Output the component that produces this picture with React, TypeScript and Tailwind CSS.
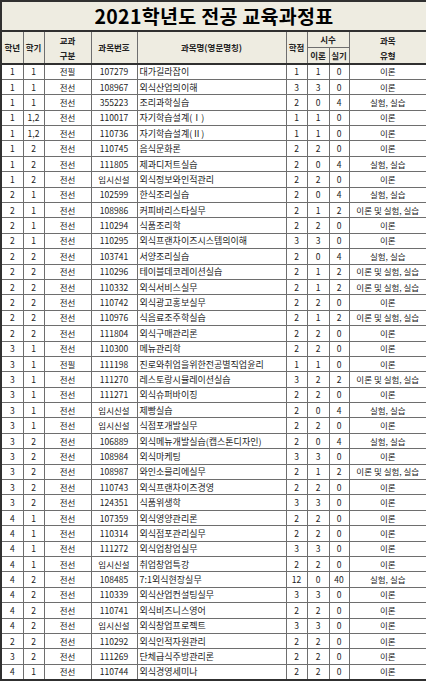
import React from 'react';

type Course = [string, string, string, string, string, number, number, number, string];

const courses: Course[] = [
  ['1', '1', '전필', '107279', '대가길라잡이', 1, 1, 0, '이론'],
  ['1', '1', '전선', '108967', '외식산업의이해', 3, 3, 0, '이론'],
  ['1', '1', '전선', '355223', '조리과학실습', 2, 0, 4, '실험, 실습'],
  ['1', '1,2', '전선', '110017', '자기학습설계(Ⅰ)', 1, 1, 0, '이론'],
  ['1', '1,2', '전선', '110736', '자기학습설계(Ⅱ)', 1, 1, 0, '이론'],
  ['1', '2', '전선', '110745', '음식문화론', 2, 2, 0, '이론'],
  ['1', '2', '전선', '111805', '제과디저트실습', 2, 0, 4, '실험, 실습'],
  ['1', '2', '전선', '임시신설', '외식정보와인적관리', 2, 2, 0, '이론'],
  ['2', '1', '전선', '102599', '한식조리실습', 2, 0, 4, '실험, 실습'],
  ['2', '1', '전선', '108986', '커피바리스타실무', 2, 1, 2, '이론 및 실험, 실습'],
  ['2', '1', '전선', '110294', '식품조리학', 2, 2, 0, '이론'],
  ['2', '1', '전선', '110295', '외식프랜차이즈시스템의이해', 3, 3, 0, '이론'],
  ['2', '2', '전선', '103741', '서양조리실습', 2, 0, 4, '실험, 실습'],
  ['2', '2', '전선', '110296', '테이블데코레이션실습', 2, 1, 2, '이론 및 실험, 실습'],
  ['2', '2', '전선', '110332', '외식서비스실무', 2, 1, 2, '이론 및 실험, 실습'],
  ['2', '2', '전선', '110742', '외식광고홍보실무', 2, 2, 0, '이론'],
  ['2', '2', '전선', '110976', '식음료조주학실습', 2, 1, 2, '이론 및 실험, 실습'],
  ['2', '2', '전선', '111804', '외식구매관리론', 2, 2, 0, '이론'],
  ['3', '1', '전선', '110300', '메뉴관리학', 2, 2, 0, '이론'],
  ['3', '1', '전필', '111198', '진로와취업을위한전공별직업윤리', 1, 1, 0, '이론'],
  ['3', '1', '전선', '111270', '레스토랑시뮬레이션실습', 3, 2, 2, '이론 및 실험, 실습'],
  ['3', '1', '전선', '111271', '외식슈퍼바이징', 2, 2, 0, '이론'],
  ['3', '1', '전선', '임시신설', '제빵실습', 2, 0, 4, '실험, 실습'],
  ['3', '1', '전선', '임시신설', '식점포개발실무', 2, 2, 0, '이론'],
  ['3', '2', '전선', '106889', '외식메뉴개발실습(캡스톤디자인)', 2, 0, 4, '실험, 실습'],
  ['3', '2', '전선', '108984', '외식마케팅', 3, 3, 0, '이론'],
  ['3', '2', '전선', '108987', '와인소믈리에실무', 2, 1, 2, '이론 및 실험, 실습'],
  ['3', '2', '전선', '110743', '외식프랜차이즈경영', 2, 2, 0, '이론'],
  ['3', '2', '전선', '124351', '식품위생학', 3, 3, 0, '이론'],
  ['4', '1', '전선', '107359', '외식영양관리론', 2, 2, 0, '이론'],
  ['4', '1', '전선', '110314', '외식점포관리실무', 2, 2, 0, '이론'],
  ['4', '1', '전선', '111272', '외식업창업실무', 3, 3, 0, '이론'],
  ['4', '1', '전선', '임시신설', '취업창업특강', 2, 2, 0, '이론'],
  ['4', '2', '전선', '108485', '7:1외식현장실무', 12, 0, 40, '실험, 실습'],
  ['4', '2', '전선', '110339', '외식산업컨설팅실무', 3, 3, 0, '이론'],
  ['4', '2', '전선', '110741', '외식비즈니스영어', 2, 2, 0, '이론'],
  ['4', '2', '전선', '임시신설', '외식창업프로젝트', 3, 3, 0, '이론'],
  ['2', '2', '전선', '110292', '외식인적자원관리', 2, 2, 0, '이론'],
  ['3', '2', '전선', '111269', '단체급식주방관리론', 2, 2, 0, '이론'],
  ['4', '1', '전선', '110744', '외식경영세미나', 2, 2, 0, '이론'],
];

const th = 'border border-[#6e6e6e] bg-[#eeece1] font-bold text-[8.5px] text-[#222] p-0 leading-[15px]';
const td = 'border border-[#6e6e6e] p-0 text-center text-[8.5px] leading-[13px] text-[#222]';

export default function App() {
  return (
    <div className="w-[426px] h-[684px] bg-white overflow-hidden font-['Noto_Sans_CJK_KR',sans-serif]">
      <table className="w-[426px] table-fixed border-collapse border-2 border-[#303030]">
        <colgroup>
          <col className="w-[22px]" />
          <col className="w-[21px]" />
          <col className="w-[47px]" />
          <col className="w-[46px]" />
          <col className="w-[149px]" />
          <col className="w-[21px]" />
          <col className="w-[22px]" />
          <col className="w-[20px]" />
          <col className="w-[78px]" />
        </colgroup>
        <thead>
          <tr className="h-[30px]">
            <th colSpan={9} className="bg-[#eeece1] border-b-2 border-[#303030] p-0 text-[19.5px] font-bold text-black leading-[28px] tracking-[0.3px]">
              2021학년도 전공 교육과정표
            </th>
          </tr>
          <tr className="h-[15px]">
            <th rowSpan={2} className={th}>학년</th>
            <th rowSpan={2} className={th}>학기</th>
            <th rowSpan={2} className={th}>
              <div>교과</div>
              <div>구분</div>
            </th>
            <th rowSpan={2} className={th}>과목번호</th>
            <th rowSpan={2} className={th}>과목명(영문명칭)</th>
            <th rowSpan={2} className={th}>학점</th>
            <th colSpan={2} className={th}>시수</th>
            <th rowSpan={2} className={th}>
              <div>과목</div>
              <div>유형</div>
            </th>
          </tr>
          <tr className="h-[15px] border-b-2 border-[#303030]">
            <th className={th}>이론</th>
            <th className={th}>실기</th>
          </tr>
        </thead>
        <tbody>
          {courses.map((c, i) => (
            <tr key={i} className="h-[15.4px]">
              <td className={td}>{c[0]}</td>
              <td className={td}>{c[1]}</td>
              <td className={td}>{c[2]}</td>
              <td className={td}>{c[3]}</td>
              <td className={`${td} !text-left !text-[9px] pl-[2px] whitespace-nowrap overflow-hidden`}>{c[4]}</td>
              <td className={td}>{c[5]}</td>
              <td className={td}>{c[6]}</td>
              <td className={td}>{c[7]}</td>
              <td className={`${td} whitespace-nowrap`}>{c[8]}</td>
            </tr>
          ))}
        </tbody>
      </table>
    </div>
  );
}
